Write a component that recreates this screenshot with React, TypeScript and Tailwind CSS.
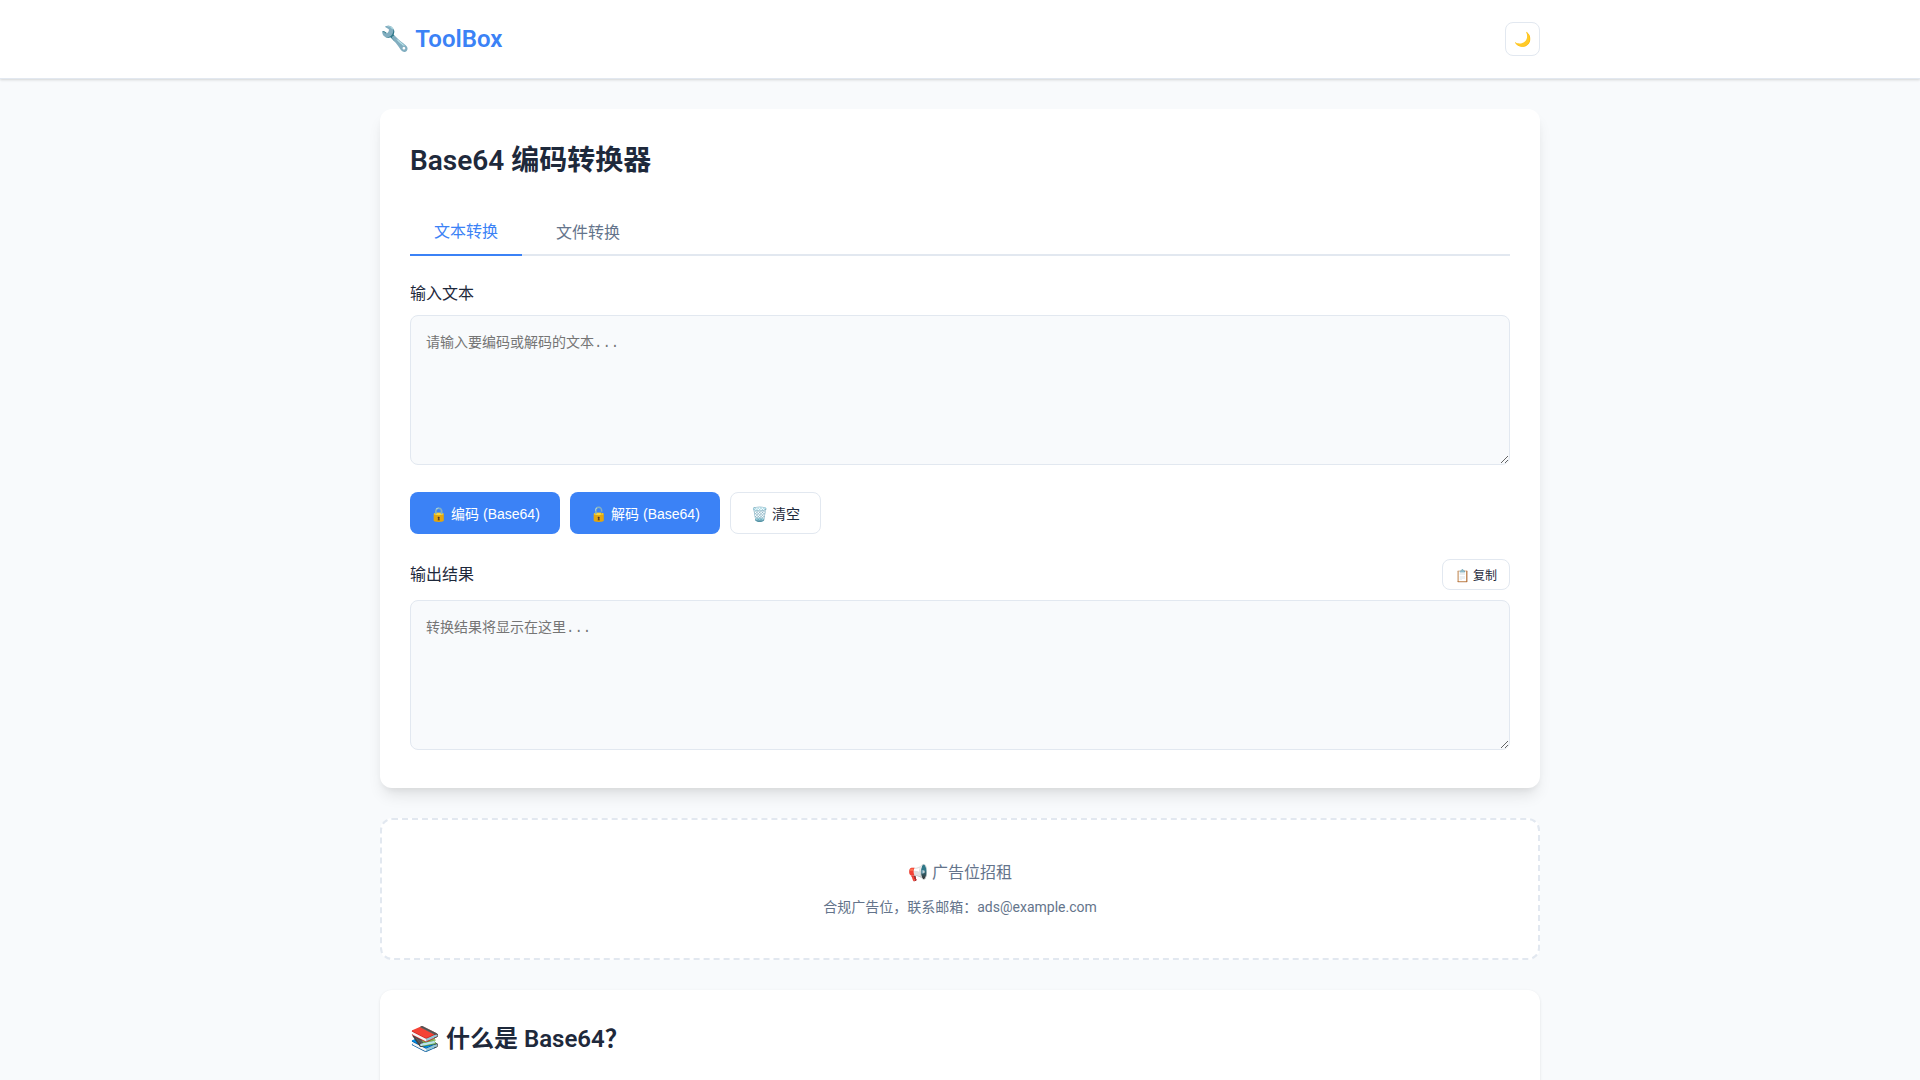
import { useState } from "react";

const card = "rounded-xl bg-white p-[30px]";
const area =
  "block h-[150px] w-full resize-y rounded-lg border border-[#e2e8f0] bg-[#f8fafc] p-[15px] font-['Liberation_Mono','Noto_Sans_CJK_SC',monospace] text-[14px] [line-height:normal] text-[#1e293b] placeholder:text-[#757575] focus:outline-none";
const tab = "-mb-[2px] px-6 py-3 font-['Liberation_Sans','Noto_Sans_CJK_SC',sans-serif] text-[16px] [line-height:normal]";
const activeTab = "border-b-2 border-[#3b82f6] text-[#3b82f6]";
const btn =
  "rounded-lg px-5 py-2.5 font-['Liberation_Sans','Noto_Sans_CJK_SC',sans-serif] text-[14px] [line-height:normal]";
const primary = "min-w-[150px] bg-[#3b82f6] text-white";

export default function App() {
  const [active, setActive] = useState("text");
  const [input, setInput] = useState("");
  const [output, setOutput] = useState("");

  const encode = () => {
    const bytes = new TextEncoder().encode(input);
    setOutput(btoa(Array.from(bytes, (b) => String.fromCharCode(b)).join("")));
  };
  const decode = () => {
    try {
      const bytes = Uint8Array.from(atob(input), (c) => c.charCodeAt(0));
      setOutput(new TextDecoder().decode(bytes));
    } catch {
      setOutput("");
    }
  };

  return (
    <div className="min-h-screen bg-[#f8fafc] font-[Roboto,'Noto_Sans_CJK_SC',sans-serif] text-[16px] leading-[26px] text-[#1e293b]">
      <header className="border-b border-[#e2e8f0] bg-white py-5 shadow-[0_1px_3px_rgba(0,0,0,0.1),0_1px_2px_rgba(0,0,0,0.06)]">
        <div className="mx-auto flex max-w-[1200px] items-center justify-between px-5">
          <a href="#" className="text-[24px] leading-[38px] font-semibold text-[#3b82f6]">🔧 ToolBox</a>
          <button type="button" aria-label="切换主题" className="rounded-lg border border-[#e2e8f0] bg-white px-2 py-2 text-[14px] leading-4">🌙</button>
        </div>
      </header>
      <main className="mx-auto max-w-[1200px] px-5 py-[30px]">
        <section className={`${card} mb-[30px] shadow-[0_10px_15px_-3px_rgba(0,0,0,0.1),0_4px_6px_-2px_rgba(0,0,0,0.05)]`}>
          <h1 className="mb-6 text-[28px] leading-[43px] font-semibold">Base64 编码转换器</h1>
          <div role="tablist" className="mb-[25px] flex gap-2.5 border-b-2 border-[#e2e8f0]">
            <button type="button" role="tab" aria-selected={active === "text"} onClick={() => setActive("text")} className={`${tab} ${active === "text" ? activeTab : "text-[#64748b]"}`}>文本转换</button>
            <button type="button" role="tab" aria-selected={active === "file"} onClick={() => setActive("file")} className={`${tab} ${active === "file" ? activeTab : "text-[#64748b]"}`}>文件转换</button>
          </div>
          <label htmlFor="source" className="mb-2 block">输入文本</label>
          <textarea id="source" value={input} onChange={(e) => setInput(e.target.value)} placeholder="请输入要编码或解码的文本..." className={area} />
          <div className="mt-[27px] mb-[25px] flex flex-wrap gap-2.5">
            <button type="button" onClick={encode} className={`${btn} ${primary}`}>🔒 编码 (Base64)</button>
            <button type="button" onClick={decode} className={`${btn} ${primary}`}>🔓 解码 (Base64)</button>
            <button type="button" onClick={() => { setInput(""); setOutput(""); }} className={`${btn} border border-[#e2e8f0] bg-white`}>🗑️ 清空</button>
          </div>
          <div className="mb-2.5 flex items-center justify-between">
            <label htmlFor="result">输出结果</label>
            <button type="button" onClick={() => navigator.clipboard?.writeText(output)} className="rounded-lg border border-[#e2e8f0] bg-white px-3 py-1.5 font-['Liberation_Sans','Noto_Sans_CJK_SC',sans-serif] text-[12px] [line-height:normal]">📋 复制</button>
          </div>
          <textarea id="result" readOnly value={output} placeholder="转换结果将显示在这里..." className={`${area} mb-2`} />
        </section>
        <aside className="mb-[30px] rounded-xl border-2 border-dashed border-[#e2e8f0] bg-white p-10 text-center text-[#64748b]">
          <p className="mb-2.5">📢 广告位招租</p>
          <p className="text-[14px] leading-[22px]">合规广告位，联系邮箱：ads@example.com</p>
        </aside>
        <section className={`${card} min-h-[300px] shadow-[0_1px_3px_rgba(0,0,0,0.1)]`}>
          <h2 className="text-[24px] leading-[38px] font-semibold">📚 什么是 Base64？</h2>
        </section>
      </main>
    </div>
  );
}
